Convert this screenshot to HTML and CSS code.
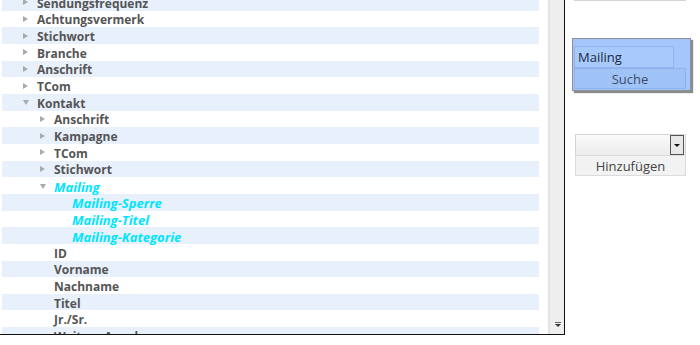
FILE: index.html
```html
<!DOCTYPE html>
<html lang="de">
<head>
    <meta charset="UTF-8">
    <meta name="viewport" content="width=device-width, initial-scale=1.0">
    <title>Felder</title>
    <link rel="stylesheet" href="styles.css">
</head>
<body>
    <div class="page">
        <div class="tree-panel">
            <div class="tree-view">
                <ul class="tree">
                    <li class="row l1"><span class="toggle closed"></span>Sendungsfrequenz</li>
                    <li class="row l1"><span class="toggle closed"></span>Achtungsvermerk</li>
                    <li class="row l1"><span class="toggle closed"></span>Stichwort</li>
                    <li class="row l1"><span class="toggle closed"></span>Branche</li>
                    <li class="row l1"><span class="toggle closed"></span>Anschrift</li>
                    <li class="row l1"><span class="toggle closed"></span>TCom</li>
                    <li class="row l1"><span class="toggle open"></span>Kontakt</li>
                    <li class="row l2"><span class="toggle closed"></span>Anschrift</li>
                    <li class="row l2"><span class="toggle closed"></span>Kampagne</li>
                    <li class="row l2"><span class="toggle closed"></span>TCom</li>
                    <li class="row l2"><span class="toggle closed"></span>Stichwort</li>
                    <li class="row l2 hit"><span class="toggle open"></span>Mailing</li>
                    <li class="row l3 hit"><span class="toggle"></span>Mailing-Sperre</li>
                    <li class="row l3 hit"><span class="toggle"></span>Mailing-Titel</li>
                    <li class="row l3 hit"><span class="toggle"></span>Mailing-Kategorie</li>
                    <li class="row l2"><span class="toggle"></span>ID</li>
                    <li class="row l2"><span class="toggle"></span>Vorname</li>
                    <li class="row l2"><span class="toggle"></span>Nachname</li>
                    <li class="row l2"><span class="toggle"></span>Titel</li>
                    <li class="row l2"><span class="toggle"></span>Jr./Sr.</li>
                    <li class="row l2"><span class="toggle"></span>Weitere Angaben</li>
                </ul>
            </div>
            <div class="scrollbar"><span class="scroll-down"></span></div>
        </div>

        <div class="sidebar">
            <div class="top-line"></div>
            <div class="search-box">
                <input class="search-input" type="text" value="Mailing">
                <button class="search-btn">Suche</button>
            </div>
            <div class="add-box">
                <div class="select"><span class="select-arrow"></span></div>
                <button class="add-btn">Hinzufügen</button>
            </div>
        </div>
    </div>
</body>
</html>
```

FILE: styles.css
```css
body {
    margin: 0;
    font-family: "Open Sans", "DejaVu Sans", sans-serif;
    background: white;
}
.page {
    display: flex;
    align-items: flex-start;
}
.tree-panel {
    display: flex;
    width: 564px;
    height: 334px;
    border-right: 1px solid #111;
    border-bottom: 1px solid #111;
    box-shadow: 0 1px 0 #bbb;
}
.tree-view {
    flex: 1;
    overflow: hidden;
    padding: 0 9px 0 2px;
}
.tree {
    list-style: none;
    margin: -6px 0 0 0;
    padding: 0;
}
.row {
    display: flex;
    align-items: center;
    box-sizing: border-box;
    height: 16.667px;
    padding-top: 2px;
    font-size: 12px;
    font-weight: 700;
    color: #555;
    white-space: nowrap;
}
.row:nth-child(odd) {
    background-color: #e8f0fc;
}
.row.l1 { padding-left: 21px; }
.row.l2 { padding-left: 38px; }
.row.l3 { padding-left: 56px; }
.row.hit {
    color: #00e5ff;
    font-size: 13px;
    font-style: italic;
    font-weight: 700;
}
.toggle {
    width: 14px;
    height: 8px;
    flex: none;
    position: relative;
}
.toggle.closed::before {
    content: "";
    position: absolute;
    left: 0;
    top: 0;
    border-left: 5px solid #aaa;
    border-top: 3.5px solid transparent;
    border-bottom: 3.5px solid transparent;
}
.toggle.open::before {
    content: "";
    position: absolute;
    left: 0;
    top: 1px;
    border-top: 5px solid #aaa;
    border-left: 3.5px solid transparent;
    border-right: 3.5px solid transparent;
}
.scrollbar {
    width: 14px;
    flex: none;
    background: #eee;
    border-left: 2px solid #e2e2e2;
    position: relative;
}
.scroll-down {
    position: absolute;
    left: 5px;
    bottom: 7px;
    border-top: 3px solid #333;
    border-left: 3px solid transparent;
    border-right: 3px solid transparent;
}
.scroll-down::before {
    content: "";
    position: absolute;
    left: -3px;
    top: -5px;
    width: 6px;
    height: 1px;
    background: #666;
}
.sidebar {
    width: 135px;
    display: flex;
    flex-direction: column;
}
.top-line {
    height: 1px;
    width: 112px;
    margin-left: 9px;
    background: #d6d6d6;
}
.search-box {
    margin: 37px 0 0 7px;
    width: 114px;
    padding: 7px 2px 1px 1px;
    background: #a4c6fa;
    border: 1px solid #8a8f99;
    box-shadow: 2px 2px 1px #8c8c8c;
    display: flex;
    flex-direction: column;
}
.search-input {
    width: 100px;
    height: 22px;
    box-sizing: border-box;
    margin: 0;
    padding: 0 3px;
    font-family: "Open Sans", sans-serif;
    font-size: 13px;
    color: #1d2a45;
    background: #a8c9fb;
    border: 1px solid #92b4ea;
    outline: none;
}
.search-btn {
    width: 112px;
    height: 21px;
    margin: 0;
    padding: 0;
    font-family: "Open Sans", sans-serif;
    font-size: 13px;
    color: #3d4d6a;
    background: #9fc2f7;
    border: 1px solid #8fb3ec;
}
.add-box {
    margin: 43px 0 0 10px;
    width: 111px;
    display: flex;
    flex-direction: column;
}
.select {
    height: 20px;
    border: 1px solid #d4d4d4;
    border-bottom: none;
    background: linear-gradient(#fafafa, #ececec);
    position: relative;
}
.select-arrow {
    position: absolute;
    right: 1px;
    top: 0;
    width: 12px;
    height: 18px;
    border: 1px solid #555;
    background: #e8e8e8;
}
.select-arrow::before {
    content: "";
    position: absolute;
    left: 3px;
    top: 8px;
    border-top: 3px solid #111;
    border-left: 3px solid transparent;
    border-right: 3px solid transparent;
}
.add-btn {
    height: 21px;
    margin: 0;
    padding: 0;
    font-family: "Open Sans", sans-serif;
    font-size: 13px;
    color: #444;
    background: #f2f2f2;
    border: 1px solid #dcdcdc;
}
```
